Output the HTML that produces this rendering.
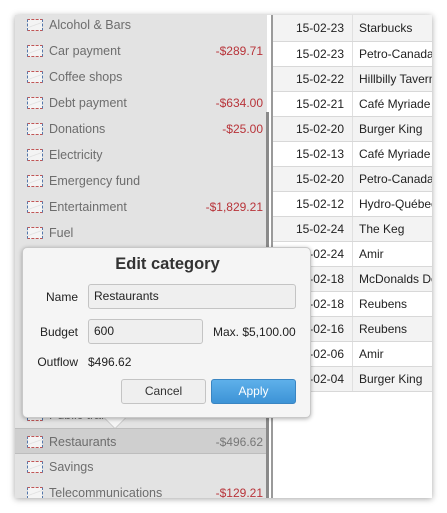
<!DOCTYPE html>
<html><head><meta charset="utf-8"><style>
*{margin:0;padding:0;box-sizing:border-box}
body{width:447px;height:513px;background:#fff;font-family:"Liberation Sans","DejaVu Sans",sans-serif;position:relative;overflow:hidden}
.win{position:absolute;left:15px;top:15px;width:417px;height:483px;background:#fff;box-shadow:0 1px 6px rgba(0,0,0,.35);overflow:hidden}
.side{position:absolute;left:0;top:0;width:252px;height:483px;background:#e3e3e3}
.row{position:absolute;left:0;width:252px;height:26px;font-size:12.5px;color:#6d6d6d;line-height:26px}
.row .ic{position:absolute;left:12px;top:7px;width:16px;height:12px;border:1px dashed #b05050;border-color:#c05555 #5577aa #c05555 #5577aa;background:linear-gradient(160deg,#f4f4f4 45%,#ddd 50%,#f4f4f4 55%)}
.row .t{position:absolute;left:34px}
.row .a{position:absolute;right:4px;color:#b8343a;font-size:12px}
.sel{background:#cfcfcf;border-top:1px solid #bdbdbd;border-bottom:1px solid #bdbdbd}
.sb{position:absolute;left:251px;top:97px;width:3px;height:386px;background:#8a8a8a}
.sep{position:absolute;left:256px;top:0;width:2px;height:483px;background:#9a9a9a}
.tbl{position:absolute;left:258px;top:0;width:159px}
.tr{height:25px;border-bottom:1px solid #d8d8d8;font-size:12px;color:#222;line-height:25px;position:relative;white-space:nowrap;overflow:hidden}
.tr:nth-child(odd){background:#f3f3f3}
.tr .d{position:absolute;left:0;width:80px;text-align:right;padding-right:8px;border-right:1px solid #e0e0e0;height:25px}
.tr .n{position:absolute;left:86px}
.pop{position:absolute;left:22px;top:247px;width:289px;height:171px;background:#f5f5f5;border:1px solid #c8c8c8;border-radius:5px;box-shadow:0 1px 4px rgba(0,0,0,.3);font-size:12px;color:#222}
.arrow{position:absolute;left:104px;top:417px;width:0;height:0;border-left:11px solid transparent;border-right:11px solid transparent;border-top:11px solid #f5f5f5;filter:drop-shadow(0 1px 0 #c0c0c0)}
.pop h1{position:absolute;left:0;width:289px;top:7px;text-align:center;font-size:16.5px;font-weight:bold;color:#333}
.lbl{position:absolute;text-align:right;width:55px;left:0}
.inp{position:absolute;background:#efefef;border:1px solid #c4c4c4;border-radius:3px;height:25px;line-height:23px;padding-left:5px}
.btn{position:absolute;top:131px;height:25px;border-radius:3px;text-align:center;line-height:23px;font-size:12px}
</style></head><body>
<div class="win">
<div class="side">
<div class="row" style="top:-3px"><span class="ic"></span><span class="t">Alcohol &amp; Bars</span></div>
<div class="row" style="top:23px"><span class="ic"></span><span class="t">Car payment</span><span class="a">-$289.71</span></div>
<div class="row" style="top:49px"><span class="ic"></span><span class="t">Coffee shops</span></div>
<div class="row" style="top:75px"><span class="ic"></span><span class="t">Debt payment</span><span class="a">-$634.00</span></div>
<div class="row" style="top:101px"><span class="ic"></span><span class="t">Donations</span><span class="a">-$25.00</span></div>
<div class="row" style="top:127px"><span class="ic"></span><span class="t">Electricity</span></div>
<div class="row" style="top:153px"><span class="ic"></span><span class="t">Emergency fund</span></div>
<div class="row" style="top:179px"><span class="ic"></span><span class="t">Entertainment</span><span class="a">-$1,829.21</span></div>
<div class="row" style="top:205px"><span class="ic"></span><span class="t">Fuel</span></div>
<div class="row" style="top:387px"><span class="ic"></span><span class="t">Public transit</span></div>
<div class="row sel" style="top:413px"><span class="ic"></span><span class="t">Restaurants</span><span class="a" style="color:#777">-$496.62</span></div>
<div class="row" style="top:439px"><span class="ic"></span><span class="t">Savings</span></div>
<div class="row" style="top:465px"><span class="ic"></span><span class="t">Telecommunications</span><span class="a">-$129.21</span></div>
</div>
<div class="sb"></div><div class="sep"></div>
<div class="tbl">
<div class="tr" style="height:27px"><span class="d" style="height:27px;line-height:27px">15-02-23</span><span class="n" style="line-height:27px">Starbucks</span></div>
<div class="tr"><span class="d">15-02-23</span><span class="n">Petro-Canada</span></div>
<div class="tr"><span class="d">15-02-22</span><span class="n">Hillbilly Tavern</span></div>
<div class="tr"><span class="d">15-02-21</span><span class="n">Café Myriade</span></div>
<div class="tr"><span class="d">15-02-20</span><span class="n">Burger King</span></div>
<div class="tr"><span class="d">15-02-13</span><span class="n">Café Myriade</span></div>
<div class="tr"><span class="d">15-02-20</span><span class="n">Petro-Canada</span></div>
<div class="tr"><span class="d">15-02-12</span><span class="n">Hydro-Québec</span></div>
<div class="tr"><span class="d">15-02-24</span><span class="n">The Keg</span></div>
<div class="tr"><span class="d">15-02-24</span><span class="n">Amir</span></div>
<div class="tr"><span class="d">15-02-18</span><span class="n">McDonalds Downtown</span></div>
<div class="tr"><span class="d">15-02-18</span><span class="n">Reubens</span></div>
<div class="tr"><span class="d">15-02-16</span><span class="n">Reubens</span></div>
<div class="tr"><span class="d">15-02-06</span><span class="n">Amir</span></div>
<div class="tr"><span class="d">15-02-04</span><span class="n">Burger King</span></div>
</div>
</div>
<div class="arrow"></div>
<div class="pop">
<h1>Edit category</h1>
<div class="lbl" style="top:42px">Name</div>
<div class="inp" style="left:65px;top:36px;width:208px">Restaurants</div>
<div class="lbl" style="top:77px">Budget</div>
<div class="inp" style="left:65px;top:71px;width:115px">600</div>
<div style="position:absolute;left:190px;top:77px">Max. $5,100.00</div>
<div class="lbl" style="top:107px">Outflow</div>
<div style="position:absolute;left:65px;top:107px">$496.62</div>
<div class="btn" style="left:98px;width:85px;background:#efefef;border:1px solid #c4c4c4;color:#333">Cancel</div>
<div class="btn" style="left:188px;width:85px;background:linear-gradient(#5eb0ea,#3d93d6);border:1px solid #3a85c2;color:#fff">Apply</div>
</div>
</body></html>
